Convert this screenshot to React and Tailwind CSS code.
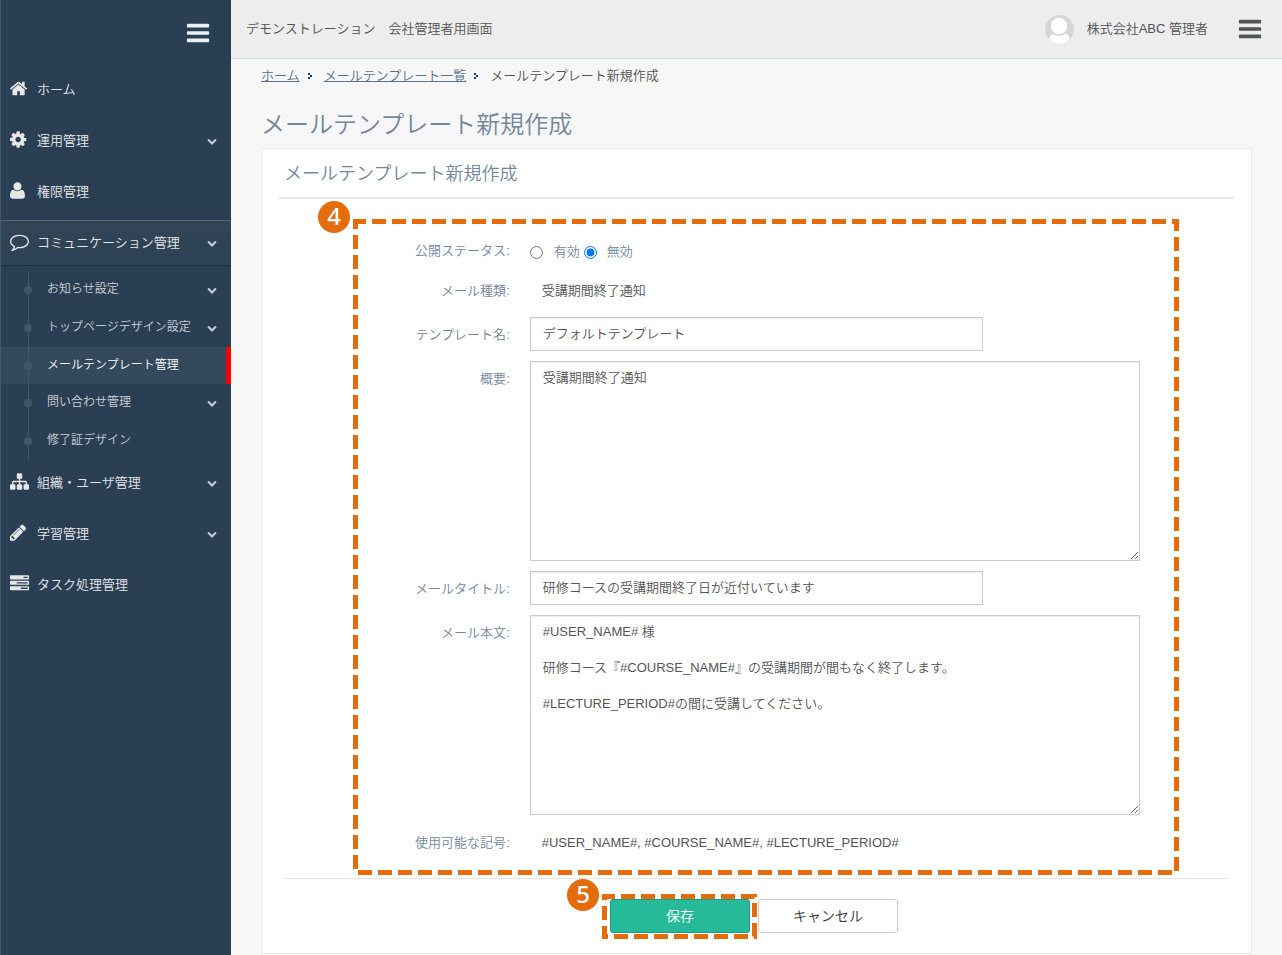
const FONT = "font-['Liberation_Sans','Noto_Sans_CJK_JP',sans-serif]";

// x is the left edge of the glyph inside its 1792 unit grid
const icons = {
    home: { x: 89, d: 'M1472 992v480q0 26-19 45t-45 19h-384v-384h-256v384h-384q-26 0-45-19t-19-45v-480q0-1 .5-3t.5-3l575-474 575 474q1 2 1 6zm223-69l-62 74q-8 9-21 11h-3q-13 0-21-7l-692-577-692 577q-12 8-24 7-13-2-21-11l-62-74q-8-10-7-23.5t11-21.5l719-599q32-26 76-26t76 26l244 204v-195q0-14 9-23t23-9h192q14 0 23 9t9 23v408l219 182q10 8 11 21.5t-7 23.5z' },
    cog: { x: 128, d: 'M1152 896q0-106-75-181t-181-75-181 75-75 181 75 181 181 75 181-75 75-181zm512-109v222q0 12-8 23t-20 13l-185 28q-19 54-39 91 35 50 107 138 10 12 10 25t-9 23q-27 37-99 108t-94 71q-12 0-26-9l-138-108q-44 23-91 38-16 136-29 186-7 28-36 28h-222q-14 0-24.5-8.5t-11.5-21.5l-28-184q-49-16-90-37l-141 107q-10 9-25 9-14 0-25-11-126-114-165-168-7-10-7-23 0-12 8-23 15-21 51-66.5t54-70.5q-27-50-41-99l-183-27q-13-2-21-12.5t-8-23.5v-222q0-12 8-23t19-13l186-28q14-46 39-92-40-57-107-138-10-12-10-24 0-10 9-23 26-36 98.5-107.5t94.5-71.5q13 0 26 10l138 107q44-23 91-38 16-136 29-186 7-28 36-28h222q14 0 24.5 8.5t11.5 21.5l28 184q49 16 90 37l142-107q9-9 24-9 13 0 25 10 129 119 165 170 7 8 7 22 0 12-8 23-15 21-51 66.5t-54 70.5q26 50 41 98l183 28q13 2 21 12.5t8 23.5z' },
    user: { x: 192, d: 'M1600 1405q0 120-73 189.5t-194 69.5h-874q-121 0-194-69.5t-73-189.5q0-53 3.5-103.5t14-109 26.5-108.5 43-97.5 62-81 85.5-53.5 111.5-20q9 0 42 21.5t74.5 48 108 48 133.5 21.5 133.5-21.5 108-48 74.5-48 42-21.5q61 0 111.5 20t85.5 53.5 62 81 43 97.5 26.5 108.5 14 109 3.5 103.5zm-320-893q0 159-112.5 271.5t-271.5 112.5-271.5-112.5-112.5-271.5 112.5-271.5 271.5-112.5 271.5 112.5 112.5 271.5z' },
    comment: { x: 0, d: 'M896 384q-204 0-381.5 69.5t-282 187.5-104.5 255q0 112 71.5 213.5t201.5 175.5l87 50-27 96q-24 91-70 172 152-63 275-171l43-38 57 6q69 8 130 8 204 0 381.5-69.5t282-187.5 104.5-255-104.5-255-282-187.5-381.5-69.5zm896 512q0 174-120 321.5t-326 233-450 85.5q-70 0-145-8-198 175-460 242-49 14-114 22h-5q-15 0-27-10.5t-16-27.5v-1q-3-4-.5-12t2-10 4.5-9.5l6-9 7-8.5 8-9q7-8 31-34.5t34.5-38 31-39.5 32.5-51 27-59 26-76q-157-89-247.5-220t-90.5-281q0-174 120-321.5t326-233 450-85.5 450 85.5 326 233 120 321.5z' },
    sitemap: { x: 0, d: 'M1792 1248v320q0 40-28 68t-68 28h-320q-40 0-68-28t-28-68v-320q0-40 28-68t68-28h96v-192h-512v192h96q40 0 68 28t28 68v320q0 40-28 68t-68 28h-320q-40 0-68-28t-28-68v-320q0-40 28-68t68-28h96v-192h-512v192h96q40 0 68 28t28 68v320q0 40-28 68t-68 28h-320q-40 0-68-28t-28-68v-320q0-40 28-68t68-28h96v-192q0-52 38-90t90-38h512v-192h-96q-40 0-68-28t-28-68v-320q0-40 28-68t68-28h320q40 0 68 28t28 68v320q0 40-28 68t-68 28h-96v192h512q52 0 90 38t38 90v192h96q40 0 68 28t28 68z' },
    pencil: { x: 128, d: 'M491 1536l91-91-235-235-91 91v107h128v128h107zm523-928q0-22-22-22-10 0-17 7l-542 542q-7 7-7 17 0 22 22 22 10 0 17-7l542-542q7-7 7-17zm-54-192l416 416-832 832h-416v-416zm683 96q0 53-37 90l-166 166-416-416 166-165q36-38 90-38 53 0 91 38l235 234q37 39 37 91z' },
    tasks: { x: 0, d: 'M1024 1408h640v-128h-640v128zm-384-512h1024v-128h-1024v128zm640-512h384v-128h-384v128zm512 832v256q0 26-19 45t-45 19h-1664q-26 0-45-19t-19-45v-256q0-26 19-45t45-19h1664q26 0 45 19t19 45zm0-512v256q0 26-19 45t-45 19h-1664q-26 0-45-19t-19-45v-256q0-26 19-45t45-19h1664q26 0 45 19t19 45zm0-512v256q0 26-19 45t-45 19h-1664q-26 0-45-19t-19-45v-256q0-26 19-45t45-19h1664q26 0 45 19t19 45z' },
    chevron: { x: 0, d: 'M1683 808l-742 741q-19 19-45 19t-45-19l-742-741q-19-19-19-45.5t19-45.5l166-165q19-19 45-19t45 19l531 531 531-531q19-19 45-19t45 19l166 165q19 19 19 45.5t-19 45.5z' },
    bars: { x: 0, d: 'M1664 1344v128q0 26-19 45t-45 19h-1408q-26 0-45-19t-19-45v-128q0-26 19-45t45-19h1408q26 0 45 19t19 45zm0-512v128q0 26-19 45t-45 19h-1408q-26 0-45-19t-19-45v-128q0-26 19-45t45-19h1408q26 0 45 19t19 45zm0-512v128q0 26-19 45t-45 19h-1408q-26 0-45-19t-19-45v-128q0-26 19-45t45-19h1408q26 0 45 19t19 45z' },
};

const menuTop = [
    { icon: 'home', label: 'ホーム' },
    { icon: 'cog', label: '運用管理', children: true },
    { icon: 'user', label: '権限管理' },
];

const subMenu = [
    { label: 'お知らせ設定', children: true },
    { label: 'トップページデザイン設定', children: true },
    { label: 'メールテンプレート管理', current: true },
    { label: '問い合わせ管理', children: true },
    { label: '修了証デザイン' },
];

const menuBottom = [
    { icon: 'sitemap', label: '組織・ユーザ管理', children: true },
    { icon: 'pencil', label: '学習管理', children: true },
    { icon: 'tasks', label: 'タスク処理管理' },
];

const mailBody = `#USER_NAME# 様

研修コース『#COURSE_NAME#』の受講期間が間もなく終了します。

#LECTURE_PERIOD#の間に受講してください。`;

function Icon({ name, className }) {
    const { x, d } = icons[name];
    return (
        <svg className={className} viewBox={`${x} 0 1792 1792`} fill="currentColor" aria-hidden="true">
            <path d={d} />
        </svg>
    );
}

function MenuItem({ item, active }) {
    return (
        <a
            href="#"
            className={`flex items-center h-[46px] pl-[9px] pr-[14px] text-[13px] text-[#e7e7e7] ${
                active ? 'border-t border-b border-t-[#566878] border-b-[#1f2f40] bg-linear-to-b from-[#334556] to-[#2c4257]' : ''
            }`}
        >
            <Icon name={item.icon} className="w-[19px] h-[19px] mr-2 mb-1" />
            <span className="flex-1">{item.label}</span>
            {item.children && <Icon name="chevron" className="w-[10px] h-[10px] text-[#c4cfda]" />}
        </a>
    );
}

function Sidebar() {
    return (
        <aside className="w-[231px] shrink-0 bg-[#2a3f54] border-l border-[#455869]">
            <div className="flex justify-end pt-5 pr-5 h-[67px]">
                <button type="button" aria-label="メニュー" className="h-[26px] text-[#ecf0f1]">
                    <Icon name="bars" className="w-[26px] h-[26px]" />
                </button>
            </div>
            <nav>
                <ul className="flex flex-col gap-[5px]">
                    {menuTop.map(item => (
                        <li key={item.label}><MenuItem item={item} /></li>
                    ))}
                    <li className="-mb-[5px]">
                        <MenuItem item={{ icon: 'comment', label: 'コミュニケーション管理', children: true }} active />
                        <ul className="relative mt-[5px] before:absolute before:left-[27px] before:inset-y-0 before:w-px before:bg-[#425668]">
                            {subMenu.map(item => (
                                <li key={item.label}>
                                    <a
                                        href="#"
                                        className={`flex items-center pl-[23px] text-xs ${
                                            item.current ? 'h-[37px] bg-[#35495d] text-white border-r-[5px] border-[#ff0000]' : 'h-[38px] pr-[14px] text-[#cacfd4]'
                                        }`}
                                    >
                                        <span className="w-2 h-2 mr-[15px] rounded-full bg-[#425668]" />
                                        <span className="flex-1 pb-[2px]">{item.label}</span>
                                        {item.children && <Icon name="chevron" className="w-[10px] h-[10px] text-[#c4cfda]" />}
                                    </a>
                                </li>
                            ))}
                        </ul>
                    </li>
                    {menuBottom.map(item => (
                        <li key={item.label}><MenuItem item={item} /></li>
                    ))}
                </ul>
            </nav>
        </aside>
    );
}

function Header() {
    return (
        <header className="flex items-center h-[59px] pl-[15px] pr-[19px] bg-[#ededed] border-b border-[#d9dee4] text-[13px] text-[#515356]">
            <p className="flex-1">デモンストレーション　会社管理者用画面</p>
            <svg className="w-[29px] h-[29px]" viewBox="0 0 29 29" aria-hidden="true">
                <circle cx="14.5" cy="14.5" r="14.5" fill="#d6d6d6" />
                <path d="M4 24q1-5 5-5q5.5 3 11 0q4 0 5 5q-4 5-10.5 5t-10.5-5z" fill="#fff" />
                <circle cx="14" cy="11" r="9" fill="#fff" stroke="#d6d6d6" strokeWidth="1.5" />
            </svg>
            <span className="ml-[13px] mr-[29px]">株式会社ABC 管理者</span>
            <button type="button" aria-label="ユーザメニュー">
                <Icon name="bars" className="w-[26px] h-[26px]" />
            </button>
        </header>
    );
}

function CrumbArrow() {
    return (
        <svg className="w-[5px] h-[6px] mx-2" viewBox="0 0 5 6" fill="#003e7e" shapeRendering="crispEdges" aria-hidden="true">
            <path d="M0 0h2v2h2v2h-2v2h-2v-2h2v-2h-2z" />
        </svg>
    );
}

function DashedFrame({ className }) {
    return (
        <div className={`absolute pointer-events-none ${className}`}>
            <svg className="w-full h-full" aria-hidden="true">
                <rect
                    x="2.5"
                    y="2.5"
                    className="w-[calc(100%-5px)] h-[calc(100%-5px)]"
                    fill="none"
                    stroke="#e46c0a"
                    strokeWidth="5"
                    strokeDasharray="14 6"
                    strokeDashoffset="3.5"
                />
            </svg>
        </div>
    );
}

function StepBadge({ children, className }) {
    return (
        <span className={`absolute flex items-center justify-center w-8 h-8 pb-[3px] rounded-full bg-[#e46c0a] text-white text-2xl leading-8 font-medium font-['Noto_Sans',sans-serif] ${className}`}>
            {children}
        </span>
    );
}

function Row({ label, htmlFor, children }) {
    return (
        <div className="flex">
            <div className="w-1/4 shrink-0 pt-[9px] pr-2 text-right text-[#73879c]">
                {htmlFor ? <label htmlFor={htmlFor}>{label}:</label> : <span>{label}:</span>}
            </div>
            <div className="flex-1 pl-3">{children}</div>
        </div>
    );
}

const control = 'block w-full px-3 bg-white border border-[#ccc] shadow-[inset_0_1px_1px_rgba(0,0,0,0.075)] text-[#555] outline-none';

export default function App() {
    return (
        <div className={`flex min-h-screen bg-[#f7f7f7] text-[13px] leading-[18px] font-[350] text-[#515356] ${FONT}`}>
            <Sidebar />
            <div className="flex-1 min-w-0">
                <Header />
                <main className="px-[30px]">
                    <nav className="flex items-center h-[34px]">
                        <a href="#" className="underline text-[#5a738e]">ホーム</a>
                        <CrumbArrow />
                        <a href="#" className="ml-[3px] underline text-[#5a738e]">メールテンプレート一覧</a>
                        <CrumbArrow />
                        <span className="ml-[3px]">メールテンプレート新規作成</span>
                    </nav>
                    <h1 className="pt-4 pb-[7px] text-2xl font-[350] text-[#73879c]">メールテンプレート新規作成</h1>

                    <section className="px-[17px] pb-5 bg-white border border-[#e6e9ed]">
                        <h2 className="h-[50px] pl-[5px] pt-[13px] border-b-2 border-[#e6e9ed] text-lg leading-6 font-[350] text-[#73879c]">
                            メールテンプレート新規作成
                        </h2>
                        <form>
                            <div className="relative flex flex-col gap-[10px] pt-[34px] pb-[26px]">
                                <Row label="公開ステータス">
                                    <div role="radiogroup" aria-label="公開ステータス" className="flex items-center pt-[10px] pb-[2px] text-[#73879c]">
                                        <input id="on" type="radio" name="status" className="w-[13px] h-[13px] mr-[11px]" />
                                        <label htmlFor="on" className="mr-1">有効</label>
                                        <input id="off" type="radio" name="status" defaultChecked className="w-[13px] h-[13px] mr-[10px]" />
                                        <label htmlFor="off">無効</label>
                                    </div>
                                </Row>
                                <div className="pb-[7px]">
                                    <Row label="メール種類">
                                        <p className="pt-[9px] pl-3">受講期間終了通知</p>
                                    </Row>
                                </div>
                                <Row label="テンプレート名" htmlFor="name">
                                    <input id="name" type="text" defaultValue="デフォルトテンプレート" className={`${control} h-[34px] max-w-[453px] pb-[3px]`} />
                                </Row>
                                <Row label="概要" htmlFor="summary">
                                    <textarea id="summary" defaultValue="受講期間終了通知" className={`${control} h-[200px] max-w-[610px] py-[7px]`} />
                                </Row>
                                <Row label="メールタイトル" htmlFor="title">
                                    <input id="title" type="text" defaultValue="研修コースの受講期間終了日が近付いています" className={`${control} h-[34px] max-w-[453px] pb-[3px]`} />
                                </Row>
                                <Row label="メール本文" htmlFor="body">
                                    <textarea id="body" defaultValue={mailBody} className={`${control} h-[200px] max-w-[610px] py-[7px]`} />
                                </Row>
                                <Row label="使用可能な記号">
                                    <p className="pt-[9px] pl-3">#USER_NAME#, #COURSE_NAME#, #LECTURE_PERIOD#</p>
                                </Row>
                                <DashedFrame className="left-[74px] right-[55px] top-5 bottom-[3px]" />
                                <StepBadge className="left-[39px] top-[2px]">4</StepBadge>
                            </div>
                            <div className="flex gap-2 mx-[5px] pt-5 pl-[326px] border-t border-[#e5e5e5] text-sm">
                                <div className="relative">
                                    <button type="submit" className="block w-[140px] h-[34px] rounded-[3px] bg-[#26b99a] border border-[#169f85] text-white">保存</button>
                                    <DashedFrame className="-left-2 -right-[7px] -top-[5px] -bottom-[6px]" />
                                    <StepBadge className="-left-[43px] -top-5">5</StepBadge>
                                </div>
                                <button type="button" className="block w-[140px] h-[34px] rounded-[3px] bg-white border border-[#ccc] text-[#333]">キャンセル</button>
                            </div>
                        </form>
                    </section>
                </main>
            </div>
        </div>
    );
}
